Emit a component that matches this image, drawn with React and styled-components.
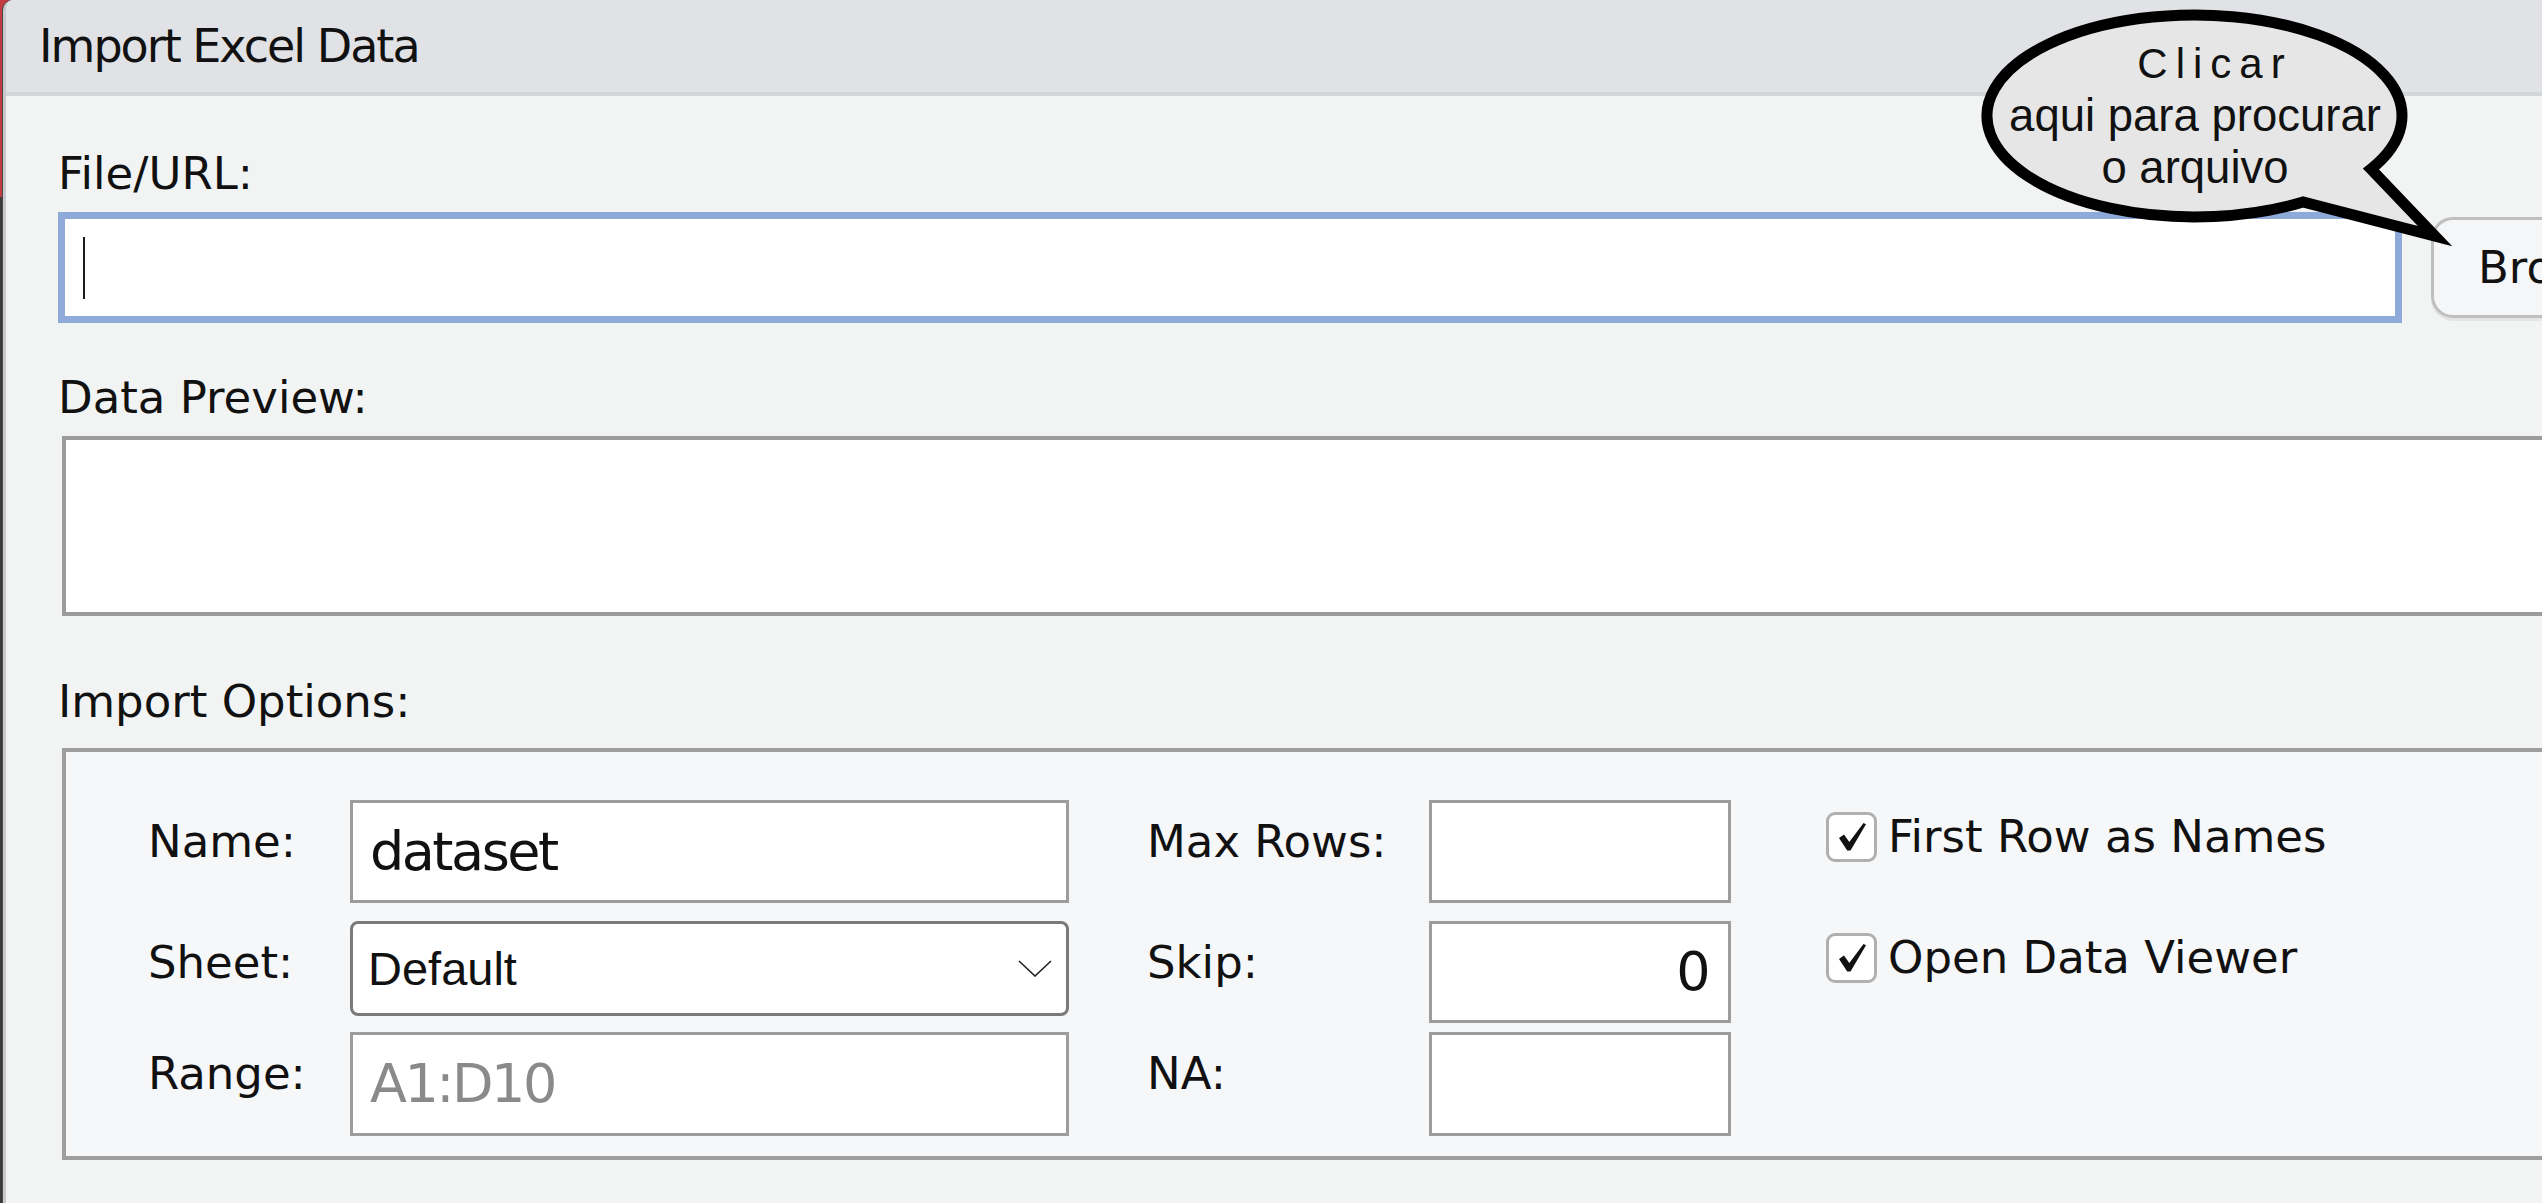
import React from "react";
import styled, { createGlobalStyle } from "styled-components";

const GlobalStyle = createGlobalStyle`
  html, body {
    margin: 0;
    padding: 0;
    width: 2542px;
    height: 1203px;
    overflow: hidden;
  }
  body {
    font-family: "DejaVu Sans", "Liberation Sans", sans-serif;
    color: #111;
  }
`;

const Desktop = styled.div`
  position: relative;
  width: 2542px;
  height: 1203px;
  overflow: hidden;
  background: linear-gradient(to bottom, #c23b40 0, #c23b40 197px, #3b3b3b 197px);
`;

const Window = styled.div`
  width: 2788px;
  min-height: 1203px;
  margin-left: 3px;
  box-sizing: border-box;
  border-left: 3px solid #c8c9cc;
  border-top-left-radius: 10px;
  box-shadow: -1px 0 0 #4a4a4a;
  background: #f2f4f4;
  overflow: hidden;
  display: flex;
  flex-direction: column;
`;

const TitleBar = styled.div`
  height: 92px;
  border-bottom: 4px solid #d4d7da;
  background: #e1e2e6;
  display: flex;
  align-items: center;
  padding-left: 33px;
  font-size: 46px;
  line-height: 52px;
  letter-spacing: -2px;
  color: #111;
`;

const Content = styled.div`
  display: flex;
  flex-direction: column;
  padding: 52px 58px 0 52px;
`;

const SectionLabel = styled.div`
  font-size: 45px;
  line-height: 52px;
  margin-top: ${(p) => p.$gap || 0}px;
  color: #111;
`;

const FileRow = styled.div`
  display: flex;
  align-items: center;
  gap: 29px;
  margin-top: 12px;
`;

const UrlField = styled.div`
  flex: 1;
  height: 111px;
  box-sizing: border-box;
  border: 7px solid #8eaad8;
  background: #fff;
  display: flex;
  align-items: center;
  padding-left: 18px;
`;

const Caret = styled.span`
  width: 2px;
  height: 62px;
  background: #1a1a1a;
`;

const BrowseButton = styled.div`
  width: 302px;
  height: 101px;
  box-sizing: border-box;
  border: 3px solid #bfbfbf;
  border-radius: 22px;
  background: #f5f6f8;
  box-shadow: 0 3px 0 #e3e4e6;
  display: flex;
  align-items: center;
  padding-left: 44px;
  font-size: 45px;
  line-height: 52px;
  white-space: nowrap;
  color: #111;
`;

const PreviewBox = styled.div`
  margin: 12px 0 0 4px;
  height: 180px;
  box-sizing: border-box;
  border: 4px solid #9b9b9b;
  background: #fff;
`;

const OptionsBox = styled.div`
  margin: 20px 0 0 4px;
  border: 4px solid #9e9e9e;
  background: #f6f7f8;
  padding: 48px 0 20px 82px;
  display: flex;
  align-items: flex-start;
`;

const FieldGroup = styled.div`
  display: grid;
  grid-template-columns: ${(p) => p.$cols};
  grid-template-rows: 121px 111px 104px;
  margin-left: ${(p) => p.$offset || 0}px;
  align-items: start;
`;

const OptLabel = styled.div`
  font-size: 45px;
  line-height: 52px;
  margin-top: 16px;
  color: #111;
  white-space: nowrap;
`;

const TextField = styled.div`
  height: ${(p) => p.$h}px;
  box-sizing: border-box;
  border: 3px solid #9c9c9c;
  background: #fff;
  display: flex;
  align-items: center;
  justify-content: ${(p) => (p.$right ? "flex-end" : "flex-start")};
  padding: 0 ${(p) => (p.$right ? 20 : 17)}px 0 17px;
  font-size: 54px;
  line-height: 62px;
  letter-spacing: -2.5px;
  color: ${(p) => (p.$placeholder ? "#8a8a8a" : "#111")};
  white-space: nowrap;
`;

const SelectBox = styled.div`
  height: 95px;
  box-sizing: border-box;
  border: 3px solid #7a7a7a;
  border-radius: 8px;
  background: #fff;
  display: flex;
  align-items: center;
  justify-content: space-between;
  padding: 0 14px 0 15px;
  font-family: "Liberation Sans", Arial, sans-serif;
  font-size: 47px;
  line-height: 54px;
  color: #111;
`;

const CheckRow = styled.div`
  display: flex;
  align-items: center;
  gap: 11px;
  padding-top: 11px;
  font-size: 45px;
  line-height: 52px;
  color: #111;
  white-space: nowrap;
`;

const CheckBox = styled.span`
  width: 51px;
  height: 50px;
  box-sizing: border-box;
  border: 3px solid #b0b0b0;
  border-radius: 9px;
  background: #fff;
  display: flex;
  align-items: center;
  justify-content: center;
`;

const Bubble = styled.div`
  position: absolute;
  left: 1975px;
  top: 0;
  width: 480px;
  height: 250px;
`;

const BubbleText = styled.div`
  position: absolute;
  left: 0;
  top: 37px;
  width: 440px;
  display: flex;
  flex-direction: column;
  align-items: center;
  font-family: "Liberation Sans", Arial, sans-serif;
  color: #111;
`;

const BubbleLine = styled.div`
  font-size: ${(p) => p.$size}px;
  line-height: ${(p) => p.$lh}px;
  letter-spacing: ${(p) => p.$ls || 0}px;
  padding-left: ${(p) => p.$shift || 0}px;
  white-space: nowrap;
`;

const Chevron = () => (
  <svg width="34" height="17" viewBox="0 0 34 17">
    <polyline points="1,1 17,16 33,1" fill="none" stroke="#222" strokeWidth="1.6" />
  </svg>
);

const Check = () => (
  <svg width="30" height="30" viewBox="0 0 30 30">
    <path
      d="M2 16 L7 12.5 L12.3 20 L26.5 1 L29 2.2 L13.5 28.5 L10.2 28.5 Z"
      fill="#111"
    />
  </svg>
);

export default function App() {
  return (
    <>
      <GlobalStyle />
      <Desktop>
        <Window>
          <TitleBar>Import Excel Data</TitleBar>
          <Content>
            <SectionLabel>File/URL:</SectionLabel>
            <FileRow>
              <UrlField>
                <Caret />
              </UrlField>
              <BrowseButton>Browse...</BrowseButton>
            </FileRow>

            <SectionLabel $gap={49}>Data Preview:</SectionLabel>
            <PreviewBox />

            <SectionLabel $gap={60}>Import Options:</SectionLabel>
            <OptionsBox>
              <FieldGroup $cols="202px 719px">
                <OptLabel>Name:</OptLabel>
                <TextField $h={103}>dataset</TextField>
                <OptLabel>Sheet:</OptLabel>
                <SelectBox>
                  <span>Default</span>
                  <Chevron />
                </SelectBox>
                <OptLabel>Range:</OptLabel>
                <TextField $h={104} $placeholder>
                  A1:D10
                </TextField>
              </FieldGroup>

              <FieldGroup $cols="282px 302px" $offset={78}>
                <OptLabel>Max Rows:</OptLabel>
                <TextField $h={103} />
                <OptLabel>Skip:</OptLabel>
                <TextField $h={102} $right>
                  0
                </TextField>
                <OptLabel>NA:</OptLabel>
                <TextField $h={104} />
              </FieldGroup>

              <FieldGroup $cols="auto" $offset={95}>
                <CheckRow>
                  <CheckBox>
                    <Check />
                  </CheckBox>
                  First Row as Names
                </CheckRow>
                <CheckRow>
                  <CheckBox>
                    <Check />
                  </CheckBox>
                  Open Data Viewer
                </CheckRow>
              </FieldGroup>
            </OptionsBox>
          </Content>
        </Window>

        <Bubble>
          <svg width="480" height="250" viewBox="0 0 480 250">
            <path
              d="M396 169 A207.5 101 0 1 0 328 202 L460 236 Z"
              fill="#e6e6e6"
              stroke="#000"
              strokeWidth="11"
              strokeLinejoin="miter"
              strokeMiterlimit="10"
            />
          </svg>
          <BubbleText>
            <BubbleLine $size={42} $lh={53} $ls={8} $shift={40}>
              Clicar
            </BubbleLine>
            <BubbleLine $size={45.5} $lh={52}>
              aqui para procurar
            </BubbleLine>
            <BubbleLine $size={45.5} $lh={52}>
              o arquivo
            </BubbleLine>
          </BubbleText>
        </Bubble>
      </Desktop>
    </>
  );
}
